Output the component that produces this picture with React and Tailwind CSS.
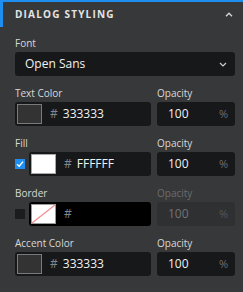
import React from 'react';

function Label({ children, disabled }) {
  return (
    <div className={`text-[10px] leading-[14px] mb-[2px] ${disabled ? 'text-[#6b6c6e]' : 'text-[#d8d8d8]'}`}>
      {children}
    </div>
  );
}

function Swatch({ color, border }) {
  if (border) {
    return (
      <div className="w-[25px] h-[20px] border border-[#9a9a9a] bg-white shrink-0">
        <svg width="23" height="18" viewBox="0 0 23 18">
          <line x1="0" y1="18" x2="23" y2="0" stroke="#f28b8b" strokeWidth="1.3" />
        </svg>
      </div>
    );
  }
  const edge = color === '#ffffff' ? 'border-[#a8a8a8]' : 'border-[#7a7a7a]';
  return <div className={`w-[25px] h-[20px] border ${edge} shrink-0`} style={{ background: color }} />;
}

function Opacity({ disabled }) {
  return (
    <div className="w-[78px]">
      <Label disabled={disabled}>Opacity</Label>
      <div
        className={`h-[24px] rounded-[3px] flex items-center justify-between pl-[11px] pr-[7px] ${
          disabled ? 'bg-[#2f3032]' : 'bg-[#17181a]'
        }`}
      >
        <span className={`text-[12px] ${disabled ? 'text-[#727375]' : 'text-[#f2f2f2]'}`}>100</span>
        <span className={`text-[11px] ${disabled ? 'text-[#55565a]' : 'text-[#6e6f72]'}`}>%</span>
      </div>
    </div>
  );
}

function ColorRow({ label, value, color, check, border }) {
  return (
    <div className="flex gap-[6px] mb-[10px]">
      <div className="w-[136px]">
        <Label>{label}</Label>
        <div className="flex items-center h-[24px]">
          {check === 'on' && (
            <div className="w-[10px] h-[10px] bg-[#1e8ff0] mr-[4px] flex items-center justify-center shrink-0">
              <svg width="8" height="8" viewBox="0 0 8 8">
                <path d="M1 4.2 L3.2 6.2 L7 1.6" fill="none" stroke="#fff" strokeWidth="1.4" />
              </svg>
            </div>
          )}
          {check === 'off' && <div className="w-[10px] h-[10px] bg-[#1b1c1e] mr-[4px] shrink-0" />}
          <div
            className={`flex-1 h-[24px] rounded-[3px] flex items-center pl-[2px] ${
              border ? 'bg-black' : 'bg-[#17181a]'
            }`}
          >
            <Swatch color={color} border={border} />
            <span className="text-[12px] text-[#85868a] ml-[8px]">#</span>
            <span className="text-[12px] text-[#f2f2f2] ml-[5px]">{value}</span>
          </div>
        </div>
      </div>
      <Opacity disabled={border} />
    </div>
  );
}

export default function App() {
  return (
    <div className="w-[243px] h-[292px] bg-[#37383a] overflow-hidden" style={{ fontFamily: '"Open Sans", sans-serif' }}>
      <div className="h-[2px] bg-[#1e8ff0]" />
      <div className="h-[25px] flex items-center justify-between border-l-[3px] border-[#1e8ff0] pl-[12px] pr-[10px]">
        <span className="text-[10px] font-bold tracking-[1.2px] text-[#e4e4e4]">DIALOG STYLING</span>
        <svg width="8" height="5" viewBox="0 0 8 5">
          <path d="M1 4.3 L4 1.2 L7 4.3" fill="none" stroke="#d8d8d8" strokeWidth="1.3" />
        </svg>
      </div>
      <div className="pl-[15px] pr-[8px] pt-[9px]">
        <div className="mb-[10px]">
          <Label>Font</Label>
          <div className="h-[24px] rounded-[3px] bg-[#17181a] flex items-center justify-between pl-[10px] pr-[8px]">
            <span className="text-[12px] text-[#f2f2f2]">Open Sans</span>
            <svg width="8" height="5" viewBox="0 0 8 5">
              <path d="M1 1 L4 4 L7 1" fill="none" stroke="#cfcfcf" strokeWidth="1.2" />
            </svg>
          </div>
        </div>
        <ColorRow label="Text Color" value="333333" color="#333333" />
        <ColorRow label="Fill" value="FFFFFF" color="#ffffff" check="on" />
        <ColorRow label="Border" value="" border check="off" />
        <ColorRow label="Accent Color" value="333333" color="#333333" />
      </div>
    </div>
  );
}
